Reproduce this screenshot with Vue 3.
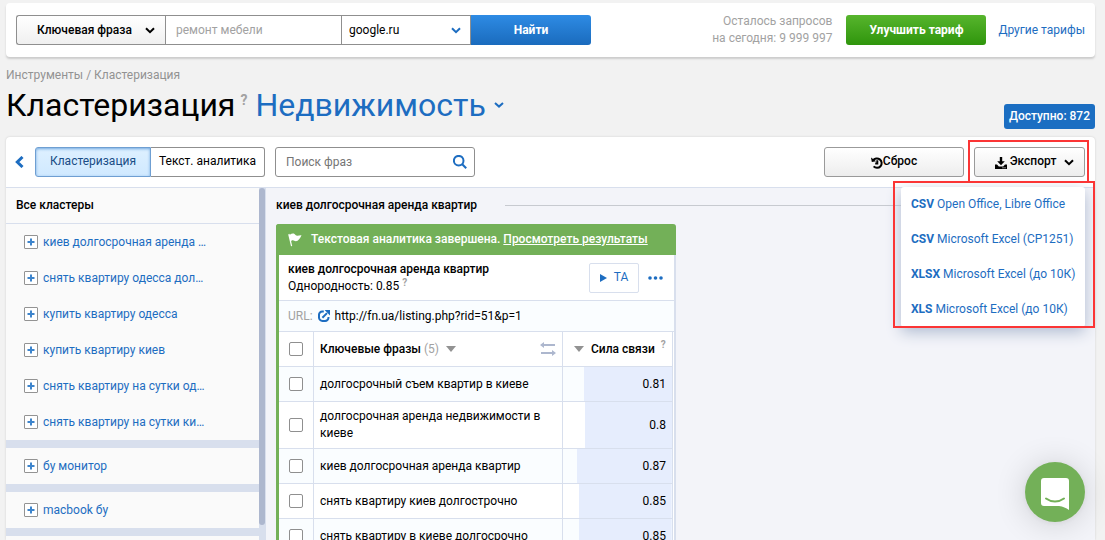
<script setup>
import { ref } from 'vue'

const target = ref('')
const search = ref('')
const groups = [
  [
    'киев долгосрочная аренда …',
    'снять квартиру одесса дол…',
    'купить квартиру одесса',
    'купить квартиру киев',
    'снять квартиру на сутки од…',
    'снять квартиру на сутки ки…',
  ],
  ['бу монитор'],
  ['macbook бу'],
  [],
]
const formats = [
  { type: 'CSV', app: 'Open Office, Libre Office' },
  { type: 'CSV', app: 'Microsoft Excel (CP1251)' },
  { type: 'XLSX', app: 'Microsoft Excel (до 10К)' },
  { type: 'XLS', app: 'Microsoft Excel (до 10К)' },
]
const rows = [
  { phrase: 'долгосрочный съем квартир в киеве', strength: 0.81 },
  { phrase: 'долгосрочная аренда недвижимости в киеве', strength: 0.8 },
  { phrase: 'киев долгосрочная аренда квартир', strength: 0.87 },
  { phrase: 'снять квартиру киев долгострочно', strength: 0.85 },
  { phrase: 'снять квартиру в киеве долгосрочно', strength: 0.85 },
]
</script>

<template>
  <div class="page">
    <header class="topbar">
      <form class="query" @submit.prevent>
        <div class="pick kind">
          <select aria-label="Тип запроса"><option>Ключевая фраза</option></select>
          <svg width="10" height="7" viewBox="0 0 10 7"><path d="M1 1.2l4 4 4-4" /></svg>
        </div>
        <input v-model="target" class="phrase" type="text" placeholder="ремонт мебели" aria-label="Ключевая фраза" />
        <div class="pick base">
          <select aria-label="База"><option>google.ru</option></select>
          <svg width="10" height="7" viewBox="0 0 10 7"><path d="M1 1.2l4 4 4-4" /></svg>
        </div>
        <button class="find" type="submit">Найти</button>
      </form>
      <p class="quota">Осталось запросов<br />на сегодня: 9 999 997</p>
      <button class="upgrade" type="button">Улучшить тариф</button>
      <a class="plans" href="#">Другие тарифы</a>
    </header>

    <nav class="crumbs"><a href="#">Инструменты</a> / <a href="#">Кластеризация</a></nav>

    <div class="heading">
      <h1>Кластеризация</h1>
      <sup class="hint">?</sup>
      <a class="project" href="#">Недвижимость
        <svg width="10" height="6" viewBox="0 0 10 6"><path d="M1 1l4 3.6L9 1" /></svg>
      </a>
      <span class="available">Доступно: 872</span>
    </div>

    <main class="panel">
      <div class="toolbar">
        <a class="back" href="#" aria-label="Назад">
          <svg width="9" height="12" viewBox="0 0 9 12"><path d="M7.5 1L2.3 6l5.2 5" /></svg>
        </a>
        <div class="tabs">
          <button class="tab active" type="button">Кластеризация</button>
          <button class="tab" type="button">Текст. аналитика</button>
        </div>
        <div class="search">
          <input v-model="search" type="text" placeholder="Поиск фраз" aria-label="Поиск фраз" />
          <svg width="14" height="14" viewBox="0 0 14 14"><circle cx="5.7" cy="5.7" r="4.8" /><path d="M9.2 9.2l4 4" /></svg>
        </div>
        <button class="grey reset" type="button">
          <svg width="12" height="12" viewBox="0 0 12 12">
            <path class="line" d="M2 3.6A4.700 4.700 0 1 1 2.600 9.400M6.300 3.300v3.200H4.200" />
            <path d="M0 .6l.8 4.400 4.400-.8z" />
          </svg>Сброс
        </button>
        <div class="export">
          <button class="grey" type="button">
            <svg width="12" height="12" viewBox="0 0 12 12">
              <path d="M4.8 0h2.4v4.3h2.6L6 8.2 2.2 4.3h2.6zM0 7.6h2l1.8 1.9h4.400L10 7.6h2V12H0z" />
              <path class="slot" d="M7.5 10.8h1M9.5 10.8h1" />
            </svg>
            <span>Экспорт</span>
            <svg class="caret" width="10" height="7" viewBox="0 0 10 7"><path d="M1 1.2l4 4 4-4" /></svg>
          </button>
          <div class="mark-button"></div>
          <ul class="menu">
            <li v-for="f in formats" :key="f.type + f.app"><a href="#"><b>{{ f.type }}</b> {{ f.app }}</a></li>
          </ul>
          <div class="mark-menu"></div>
        </div>
      </div>

      <div class="work">
        <aside class="side">
          <h2>Все кластеры</h2>
          <ul v-for="(group, i) in groups" :key="i" class="group">
            <li v-for="name in group" :key="name">
              <button class="plus" type="button" :aria-label="'Добавить ' + name">
                <svg width="8" height="8" viewBox="0 0 8 8"><path d="M4 .5v7M.5 4h7" /></svg>
              </button>
              <a href="#">{{ name }}</a>
            </li>
          </ul>
        </aside>
        <div class="track"><div class="thumb"></div></div>

        <section class="content">
          <h2 class="cluster-title"><span>киев долгосрочная аренда квартир</span></h2>
          <article class="card">
            <div class="notice">
              <svg width="14" height="14" viewBox="0 0 14 14"><path d="M.2 1.6L1.4.8l.4 1C3.5.7 5 0 6.500 1c1.400 1 1.600 2 3 1.700 1.200-.2 2.400-.7 4-.5-1.300 3-3.200 5.800-5.600 6-1.600 0-1.800-1-3.200-.9-.9.1-1.100.4-1.600.9l1.100 4.800-1.200.3z" /></svg>
              <span>Текстовая аналитика завершена. <a href="#">Просмотреть результаты</a></span>
            </div>
            <div class="summary">
              <div class="about">
                <h3>киев долгосрочная аренда квартир</h3>
                <p>Однородность: 0.85 <sup>?</sup></p>
              </div>
              <button class="ta" type="button">
                <svg width="7" height="8" viewBox="0 0 7 8"><path d="M0 0l7 4-7 4z" /></svg>ТА
              </button>
              <button class="more" type="button" aria-label="Ещё">
                <svg width="15" height="4" viewBox="0 0 15 4"><circle cx="2" cy="2" r="1.800" /><circle cx="7.500" cy="2" r="1.800" /><circle cx="13" cy="2" r="1.800" /></svg>
              </button>
            </div>
            <div class="url">
              <span>URL:</span>
              <svg width="12" height="12" viewBox="0 0 12 12">
                <path class="line" d="M5.800 1.500H4.500A3.300 3.300 0 0 0 1 5v2.200A3.600 3.600 0 0 0 4.700 11h2A3.600 3.600 0 0 0 10.500 7.200V7M4.400 7.700L9 3.100" />
                <path d="M6.600 0H12v5.400z" />
              </svg>
              <a href="#">http://fn.ua/listing.php?rid=51&amp;p=1</a>
            </div>
            <table>
              <thead>
                <tr>
                  <th class="check"><input type="checkbox" aria-label="Выбрать все" /></th>
                  <th>
                    <div class="th">
                      <span>Ключевые фразы <i>(5)</i></span>
                      <svg class="sort" width="10" height="6" viewBox="0 0 10 6"><path d="M0 0h10L5 6z" /></svg>
                      <svg class="swap" width="16" height="14" viewBox="0 0 16 14">
                        <path class="line" d="M2 3h13M1 11h13" /><path d="M4 0v6L0 3zM12 8v6l4-3z" />
                      </svg>
                    </div>
                  </th>
                  <th class="power">
                    <div class="th">
                      <svg width="10" height="6" viewBox="0 0 10 6"><path d="M0 0h10L5 6z" /></svg>
                      <span>Сила связи</span><sup>?</sup>
                    </div>
                  </th>
                </tr>
              </thead>
              <tbody>
                <tr v-for="r in rows" :key="r.phrase">
                  <td class="check"><input type="checkbox" :aria-label="r.phrase" /></td>
                  <td>{{ r.phrase }}</td>
                  <td class="bar" :style="{ backgroundSize: r.strength * 100 + '% 100%' }">{{ r.strength }}</td>
                </tr>
              </tbody>
            </table>
          </article>
        </section>
      </div>
    </main>

    <button class="chat" type="button" aria-label="Открыть чат">
      <svg width="28" height="32" viewBox="0 0 28 32">
        <path d="M3 0h22a3 3 0 0 1 3 3v29c-3-2-6-3.500-10-4H3a3 3 0 0 1-3-3V3a3 3 0 0 1 3-3z" />
        <path class="smile" d="M5 20.500c5.500 4 12.500 4 18 0" />
      </svg>
    </button>
  </div>
</template>

<style>
body {
  background: #f2f2f2;
}
</style>

<style scoped>
* {
  box-sizing: border-box;
}
.page {
  display: flex;
  flex-direction: column;
  height: 100vh;
  overflow: hidden;
  padding: 3px 10px 0 6px;
  font: 12px/17px Roboto, "Liberation Sans", sans-serif;
  color: #000;
}
h1, h2, h3, p, ul {
  margin: 0;
  padding: 0;
}
ul {
  list-style: none;
}
h2, h3 {
  font-size: 12px;
  font-weight: 500;
}
a {
  color: #1d6dc1;
  text-decoration: none;
}
button, input, select {
  margin: 0;
  font: inherit;
  color: inherit;
}
button {
  cursor: pointer;
}
svg {
  display: block;
  flex: none;
}
sup {
  font-size: 10px;
  line-height: 10px;
  font-weight: 700;
  color: #a2a2a2;
}
.topbar {
  display: flex;
  align-items: center;
  flex: none;
  height: 54px;
  padding: 0 10px;
  background: #fff;
  border-radius: 4px;
  box-shadow: 0 2px 2px #ccc;
}
.query {
  display: flex;
  height: 30px;
}
.pick {
  position: relative;
}
.pick select {
  width: 100%;
  height: 30px;
  border: 1px solid #8f8f8f;
  appearance: none;
  background: #fff;
}
.pick svg {
  position: absolute;
  top: 12px;
  right: 10px;
  pointer-events: none;
}
.pick path, .caret path {
  fill: none;
  stroke: #000;
  stroke-width: 2;
}
.kind {
  width: 149px;
}
.kind select {
  padding: 0 20px;
  border-right: 0;
  border-radius: 3px 0 0 3px;
  font-weight: 500;
  background: linear-gradient(#fff, #f0f0f0);
}
.phrase {
  width: 176px;
  padding: 0 10px;
  border: 1px solid #8f8f8f;
  border-right: 0;
}
.phrase::placeholder {
  color: #a2a2a2;
}
.base {
  width: 130px;
}
.base select {
  padding: 0 7px;
}
.base path {
  stroke: #1d6dc1;
}
.find, .upgrade {
  height: 30px;
  border: 0;
  color: #fff;
  font-weight: 700;
}
.find {
  width: 120px;
  border-radius: 0 3px 3px 0;
  background: linear-gradient(#2e8be4, #1a6bbd);
}
.quota {
  margin-left: auto;
  text-align: right;
  color: #a2a2a2;
}
.upgrade {
  width: 140px;
  margin: 0 12px 0 14px;
  border-radius: 3px;
  background: linear-gradient(#57b52d, #2f950c);
}
.crumbs, .crumbs a {
  color: #929292;
}
.crumbs {
  margin-top: 10px;
}
.heading {
  display: flex;
  align-items: center;
  height: 42px;
  margin-bottom: 11px;
}
h1, .project {
  font-size: 32px;
  line-height: 42px;
  font-weight: 400;
}
.hint {
  margin: 0 8px 10px 5px;
  font-size: 14px;
}
.project {
  display: flex;
  align-items: center;
  gap: 8px;
}
.project path {
  fill: none;
  stroke: #1d6dc1;
  stroke-width: 2;
}
.available {
  align-self: flex-end;
  margin-left: auto;
  margin-bottom: -3px;
  padding: 4px 5px;
  border-radius: 3px;
  background: #1b6ec2;
  color: #fff;
  font-weight: 500;
}
.panel {
  display: flex;
  flex-direction: column;
  flex: 1;
  min-height: 0;
  background: #fff;
  border-radius: 4px 4px 0 0;
  box-shadow: 0 0 2px #c8c8c8;
}
.toolbar {
  display: flex;
  align-items: center;
  flex: none;
  height: 51px;
  padding: 0 10px 1px 9px;
  border-bottom: 1px solid #d8dfed;
}
.back path {
  fill: none;
  stroke: #1d6dc1;
  stroke-width: 3;
}
.tabs {
  display: flex;
  margin: 0 10px 0 11px;
}
.tab {
  width: 114px;
  height: 30px;
  padding: 0;
  border: 1px solid #8f8f8f;
  border-left: 0;
  border-radius: 0 3px 3px 0;
  background: #fff;
}
.tab.active {
  width: 116px;
  border-left: 1px solid #6f9fd2;
  border-color: #6f9fd2;
  border-radius: 3px 0 0 3px;
  background: linear-gradient(#def0ff, #d0e9ff);
  box-shadow: inset 0 1px 3px #70a8e0;
  color: #1a4d86;
}
.search {
  position: relative;
  width: 200px;
}
.search input {
  width: 100%;
  height: 30px;
  padding: 0 10px;
  border: 1px solid #8f8f8f;
  border-radius: 3px;
}
.search svg {
  position: absolute;
  top: 8px;
  right: 8px;
  fill: none;
  stroke: #1d6dc1;
  stroke-width: 2;
}
.grey {
  display: flex;
  align-items: center;
  justify-content: center;
  width: 100%;
  height: 30px;
  padding: 0;
  border: 1px solid #9a9a9a;
  border-radius: 3px;
  background: linear-gradient(#fff, #ededed);
  font-weight: 500;
}
.grey .line {
  fill: none;
  stroke: #000;
  stroke-width: 2;
}
.reset {
  width: 140px;
  margin: 0 10px 0 auto;
}
.reset svg, .export svg {
  margin-top: 2px;
}
.export {
  position: relative;
  width: 111px;
}
.export span {
  margin: 0 8px 0 3px;
}
.export button {
  padding-left: 10px;
}
.export .slot {
  stroke: #fff;
}
.menu {
  position: absolute;
  z-index: 2;
  top: 40px;
  right: 0;
  width: 184px;
  background: #fff;
  border-radius: 3px;
  box-shadow: 0 5px 15px #aebad0;
}
.menu li {
  padding: 9px 10px;
  white-space: nowrap;
}
.mark-button, .mark-menu {
  position: absolute;
  z-index: 3;
  border: 2px solid #fb3535;
  pointer-events: none;
}
.mark-button {
  top: -7px;
  right: -4px;
  width: 121px;
  height: 43px;
}
.mark-menu {
  top: 34px;
  right: -10px;
  width: 202px;
  height: 147px;
}
.work {
  display: flex;
  flex: 1;
  min-height: 0;
}
.side {
  width: 253px;
  overflow: hidden;
  background: #d8dfed;
}
.side h2 {
  padding: 9px 10px;
  border-bottom: 1px solid #d8dfed;
  background: #fafafa;
}
.group {
  min-height: 36px;
  margin-bottom: 8px;
  background: #fafafa;
}
.group li {
  display: flex;
  align-items: center;
  gap: 5px;
  height: 36px;
  padding-left: 18px;
}
.plus {
  display: grid;
  place-items: center;
  width: 14px;
  height: 14px;
  padding: 0;
  border: 1px solid #939393;
  border-radius: 1px;
  background: #fff;
}
.plus path {
  stroke: #3d84cc;
  stroke-width: 2;
}
.track {
  width: 7px;
  background: #d8dfed;
}
.thumb {
  width: 6px;
  height: 337px;
  border-radius: 3px;
  background: #adb7ce;
}
.content {
  flex: 1;
  padding: 9px 10px 0;
  overflow: hidden;
  background: #f3f4f9;
}
.cluster-title {
  display: flex;
  align-items: center;
  gap: 28px;
  margin-bottom: 10px;
}
.cluster-title::after {
  content: "";
  flex: 1;
  height: 1px;
  background: #c7cad0;
}
.card {
  width: 400px;
  border-left: 3px solid #73b058;
  border-right: 2px solid #d8dfed;
  border-radius: 3px 3px 0 0;
  background: #fff;
}
.notice {
  display: flex;
  align-items: center;
  gap: 9px;
  height: 31px;
  margin: 0 -2px 0 -3px;
  padding-left: 12px;
  border-radius: 3px 3px 0 0;
  background: #73b058;
  color: #fff;
  font-weight: 500;
}
.notice svg {
  fill: #fff;
}
.notice a {
  color: #fff;
  text-decoration: underline;
}
.summary {
  display: flex;
  align-items: center;
  height: 46px;
  padding: 0 11px 0 9px;
  border-bottom: 1px solid #d8dfed;
}
.about {
  flex: 1;
}
.about sup {
  vertical-align: 4px;
}
.ta {
  display: flex;
  align-items: center;
  justify-content: center;
  gap: 7px;
  width: 50px;
  height: 30px;
  padding: 0;
  border: 1px solid #d8dfed;
  border-radius: 2px;
  background: #fff;
  color: #1d6dc1;
}
.ta svg, .more svg, .url svg {
  fill: #1d6dc1;
}
.more {
  margin-left: 9px;
  padding: 4px 0;
  border: 0;
  background: none;
}
.url {
  display: flex;
  align-items: center;
  height: 31px;
  padding-left: 9px;
  border-bottom: 1px solid #d8dfed;
  background: #fafdff;
}
.url span {
  color: #a2a2a2;
}
.url svg {
  margin: 0 5px;
}
.url a {
  color: #000;
}
.url .line {
  fill: none;
  stroke: #1d6dc1;
  stroke-width: 2;
}
table {
  width: calc(100% - 1px);
  table-layout: fixed;
  border-spacing: 0;
}
th, td {
  height: 35px;
  padding: 6px;
  border-right: 1px solid #d8dfed;
  border-bottom: 1px solid #d8dfed;
  font-weight: 400;
  text-align: left;
}
th {
  font-weight: 500;
}
.check {
  width: 35px;
  padding: 0 0 0 10px;
}
.check input {
  display: block;
  width: 14px;
  height: 14px;
  appearance: none;
  border: 1px solid #8f8f8f;
  border-radius: 2px;
  background: #fff;
}
.power {
  width: 110px;
}
tbody tr:nth-child(odd) {
  background: #fafdff;
}
.bar {
  background: linear-gradient(#e6edfd, #e6edfd) no-repeat right;
  text-align: right;
}
.th {
  display: flex;
  align-items: center;
  white-space: nowrap;
  fill: #929292;
}
.th i {
  font-style: normal;
  font-weight: 400;
  color: #a2a2a2;
}
.sort {
  margin-left: 7px;
}
.swap {
  margin-left: auto;
  fill: #adb7ce;
}
.swap .line {
  stroke: #adb7ce;
  stroke-width: 2;
}
.power .th {
  padding-left: 5px;
}
.power span {
  margin: 0 6px 0 7px;
}
.power sup {
  margin-bottom: 9px;
}
.chat {
  position: fixed;
  right: 20px;
  bottom: 18px;
  display: grid;
  place-items: center;
  width: 60px;
  height: 60px;
  padding: 3px 0 0;
  border: 0;
  border-radius: 50%;
  background: #73b058;
  box-shadow: 0 1px 6px rgba(0, 0, 0, .06), 0 2px 32px rgba(0, 0, 0, .16);
}
.chat svg {
  fill: #fff;
}
.chat .smile {
  fill: none;
  stroke: #73b058;
  stroke-width: 2;
  stroke-linecap: round;
}
</style>
